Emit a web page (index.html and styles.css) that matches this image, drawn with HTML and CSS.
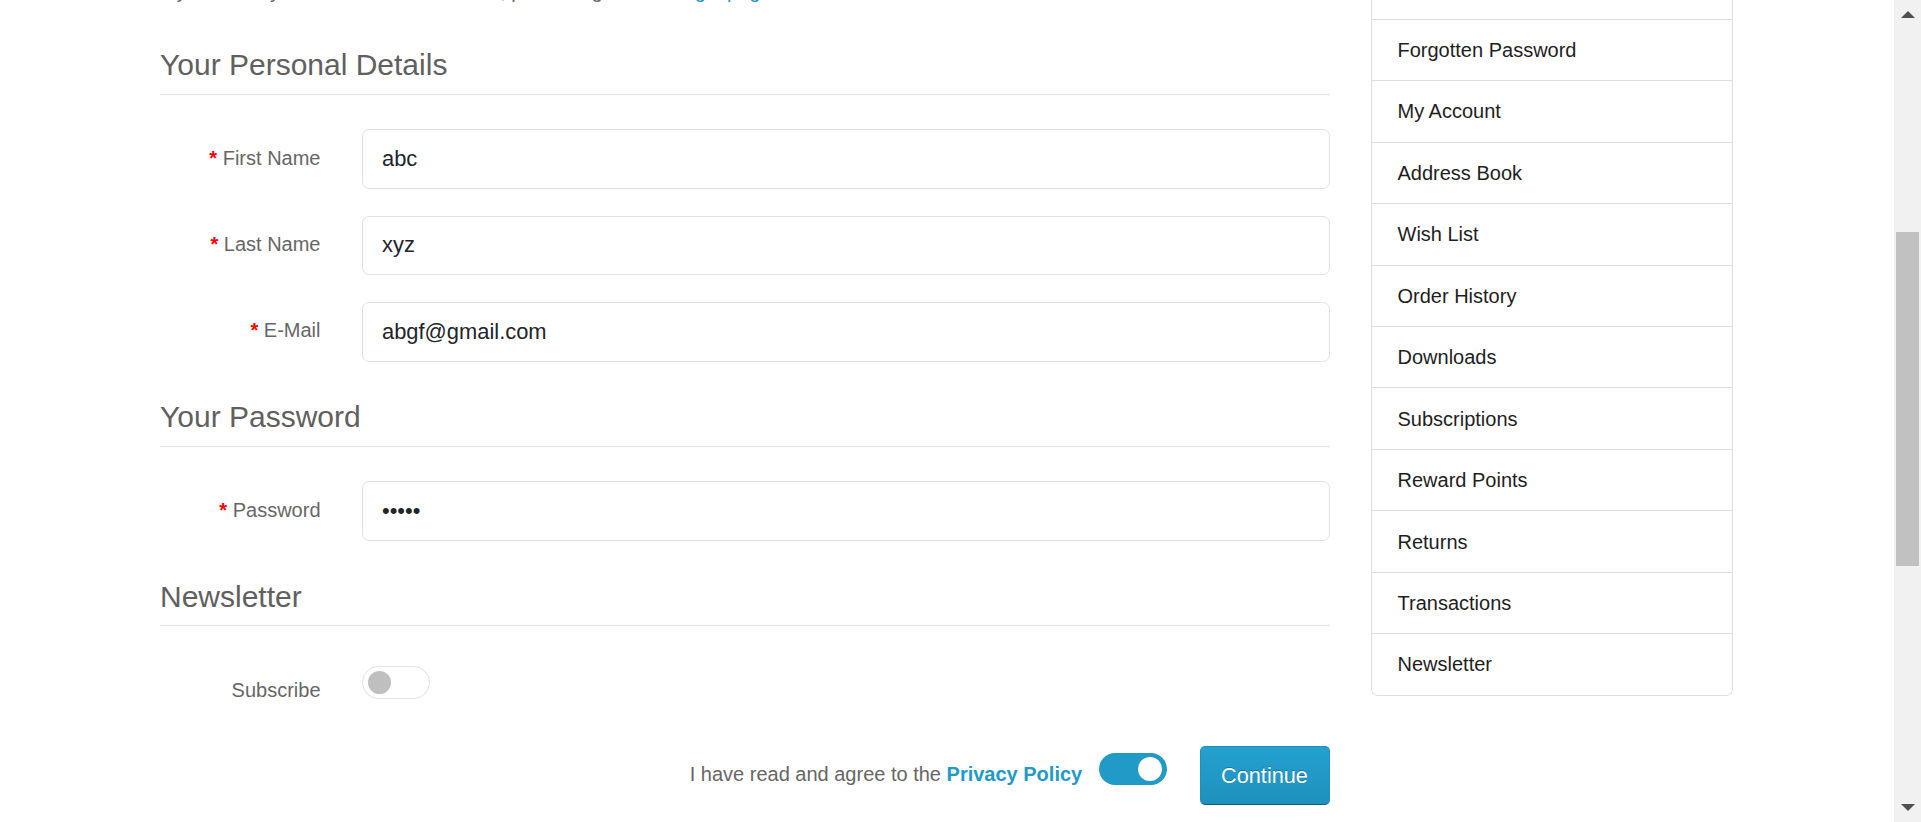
FILE: index.html
```html
<!DOCTYPE html>
<html lang="en">
<head>
<meta charset="utf-8">
<title>Register Account</title>
<link rel="stylesheet" href="styles.css">
</head>
<body>
<div class="page">
  <div class="container">
    <main class="content">
      <p class="intro">If you already have an account with us, please login at the <a class="link" href="#">login page</a>.</p>
      <form class="form">
        <section class="group">
          <h2 class="legend">Your Personal Details</h2>
          <div class="field">
            <label class="field-label required">First Name</label>
            <div class="field-control"><input class="input" type="text" value="abc"></div>
          </div>
          <div class="field">
            <label class="field-label required">Last Name</label>
            <div class="field-control"><input class="input" type="text" value="xyz"></div>
          </div>
          <div class="field">
            <label class="field-label required">E-Mail</label>
            <div class="field-control"><input class="input" type="text" value="abgf@gmail.com"></div>
          </div>
        </section>
        <section class="group">
          <h2 class="legend">Your Password</h2>
          <div class="field">
            <label class="field-label required">Password</label>
            <div class="field-control"><input class="input" type="password" value="abcde"></div>
          </div>
        </section>
        <section class="group">
          <h2 class="legend">Newsletter</h2>
          <div class="field field-switch">
            <label class="field-label label-switch">Subscribe</label>
            <div class="field-control"><span class="switch switch-off"><span class="knob"></span></span></div>
          </div>
        </section>
        <div class="agree-row">
          <span class="agree-text">I have read and agree to the <a class="link link-strong" href="#">Privacy Policy</a></span>
          <span class="switch switch-on"><span class="knob"></span></span>
          <button class="btn-primary" type="button">Continue</button>
        </div>
      </form>
    </main>
    <aside class="sidebar">
      <nav class="list-group">
        <a class="list-item" href="#">Login</a>
        <a class="list-item" href="#">Register</a>
        <a class="list-item" href="#">Forgotten Password</a>
        <a class="list-item" href="#">My Account</a>
        <a class="list-item" href="#">Address Book</a>
        <a class="list-item" href="#">Wish List</a>
        <a class="list-item" href="#">Order History</a>
        <a class="list-item" href="#">Downloads</a>
        <a class="list-item" href="#">Subscriptions</a>
        <a class="list-item" href="#">Reward Points</a>
        <a class="list-item" href="#">Returns</a>
        <a class="list-item" href="#">Transactions</a>
        <a class="list-item" href="#">Newsletter</a>
      </nav>
    </aside>
  </div>
</div>
<div class="scrollbar">
  <span class="arrow-up"></span>
  <span class="thumb"></span>
  <span class="arrow-down"></span>
</div>
</body>
</html>
```
FILE: styles.css
```css
html, body {
  margin: 0;
  padding: 0;
  height: 822px;
  overflow: hidden;
  background: #fff;
}
body {
  display: flex;
  font-family: "Liberation Sans", Arial, sans-serif;
  font-size: 20px;
  line-height: 30px;
  color: #666;
}
.page {
  flex: 1;
  min-width: 0;
}
.container {
  display: flex;
  margin-left: 160px;
  width: 1572.5px;
  column-gap: 41px;
}
.content {
  width: 1169.5px;
  flex: none;
}
.intro {
  margin: -24.1px 0 30.55px;
  white-space: nowrap;
}
.link {
  color: #229ac8;
  text-decoration: none;
}
.link-strong {
  font-weight: bold;
}
.form {
  margin: 0;
}
.group {
  padding-top: 9.4px;
}
.legend {
  margin: 0 0 34.5px;
  font-size: 30px;
  line-height: 36px;
  font-weight: 400;
  color: #606060;
  padding-top: 1.5px;
  padding-bottom: 10.5px;
  border-bottom: 1px solid #e3e3e3;
}
.field {
  display: flex;
  align-items: flex-start;
  column-gap: 41.5px;
  margin-bottom: 27px;
}
.field-label {
  width: 160.5px;
  flex: none;
  text-align: right;
  padding-top: 13.2px;
  color: #666;
}
.required::before {
  content: "* ";
  color: #f00;
  font-weight: bold;
}
.label-switch {
  padding-top: 14px;
}
.field-control {
  flex: 1;
  min-width: 0;
}
.input {
  display: block;
  box-sizing: border-box;
  width: 100%;
  height: 59.4px;
  padding: 0 19px;
  border: 1px solid #dee2e6;
  border-radius: 7px;
  font-family: "Liberation Sans", Arial, sans-serif;
  font-size: 21.9px;
  color: #212529;
  background: #fff;
  outline: none;
}
.switch {
  display: flex;
  box-sizing: border-box;
  align-items: center;
  border-radius: 17px;
}
.switch-off {
  width: 67.5px;
  height: 33px;
  margin-top: 5.3px;
  border: 1px solid #dee2e6;
  padding-left: 5px;
  background: #fff;
}
.switch-off .knob {
  width: 23px;
  height: 23px;
  border-radius: 50%;
  background: #bfbfbf;
}
.switch-on {
  width: 67.3px;
  height: 32.3px;
  margin: 7px 0 0 17px;
  justify-content: flex-end;
  padding-right: 4.3px;
  background: #229ac8;
}
.switch-on .knob {
  width: 24px;
  height: 24px;
  border-radius: 50%;
  background: #fff;
}
.agree-row {
  display: flex;
  justify-content: flex-end;
  align-items: flex-start;
  margin-top: 41.45px;
}
.agree-text {
  margin-top: 13.2px;
  white-space: nowrap;
}
.btn-primary {
  box-sizing: border-box;
  width: 130px;
  height: 59.3px;
  margin-left: 33px;
  padding: 0;
  border: 1px solid #1f90bb;
  border-bottom-color: #145e7a;
  border-radius: 5px;
  background: linear-gradient(to bottom, #23a1d1, #1f90bb);
  color: #fff;
  font-family: "Liberation Sans", Arial, sans-serif;
  font-size: 21.7px;
  text-shadow: 0 -1px 0 rgba(0, 0, 0, 0.25);
}
.sidebar {
  width: 362px;
  flex: none;
}
.list-group {
  display: flex;
  flex-direction: column;
  margin-top: -104.1px;
  border: 1px solid #dfdfdf;
  border-radius: 7px;
}
.list-item {
  display: block;
  padding: 15.22px 25px 15.22px 26px;
  line-height: 30px;
  color: #1e1e1e;
  text-decoration: none;
  border-top: 1px solid #dfdfdf;
}
.list-item:first-child {
  border-top: 0;
}
.scrollbar {
  width: 27px;
  flex: none;
  height: 822px;
  background: #f1f1f1;
  display: flex;
  flex-direction: column;
  align-items: center;
}
.arrow-up {
  margin-top: 10.5px;
  width: 0;
  height: 0;
  border-left: 7px solid transparent;
  border-right: 7px solid transparent;
  border-bottom: 7px solid #505050;
}
.thumb {
  margin-top: 214.5px;
  align-self: flex-start;
  margin-left: 1.5px;
  width: 23.5px;
  height: 334px;
  background: #c1c1c1;
}
.arrow-down {
  margin-top: auto;
  margin-bottom: 11px;
  width: 0;
  height: 0;
  border-left: 7px solid transparent;
  border-right: 7px solid transparent;
  border-top: 7px solid #505050;
}
```
